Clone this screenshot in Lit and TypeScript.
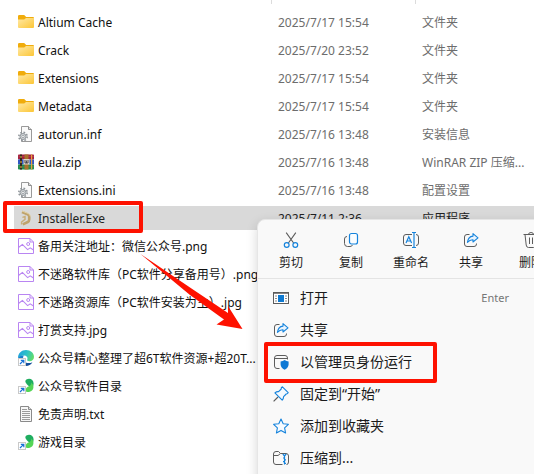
import { LitElement, html, svg, css, nothing } from "lit";
import { customElement } from "lit/decorators.js";
import { classMap } from "lit/directives/class-map.js";

const BLUE = "#1583dc";
const INK = "#5c5c5c";

const shortcut = svg`
  <rect x="0.5" y="8.5" width="7" height="7" fill="#fff" stroke="#c9c9c9"/>
  <path d="M2 14 L5.6 10.4 M2.8 10.3 H5.8 V13.3" fill="none" stroke="#1a73d8" stroke-width="1.2"/>`;

const leaves = svg`
  <path d="M8.4 1.4 C12 -0.4 15.5 1.6 15.6 5.4 C15.6 8 14.6 9 13 9.6 C11 8.6 9 6.8 7.8 4.8 C7 3.4 7.4 2 8.4 1.4Z" fill="#1fad60"/>
  <path d="M13.4 4.4 C16.8 8 15.8 12.6 11.8 13.8 C9.6 14.4 8 13.8 7.4 12.8 C7.4 9.8 9.4 8.8 11 8.2 C12.4 7.6 13.2 6.6 13.4 4.4Z" fill="#55d556"/>
  ${shortcut}`;

const gearPage = svg`
  <path d="M3.5 0.5 H10.5 L13.5 3.5 V15.5 H3.5Z" fill="#fafafa" stroke="#9a9a9a"/>
  <path d="M10.5 0.5 V3.5 H13.5" fill="#ddd" stroke="#8d8d8d"/>
  <circle cx="5" cy="10.5" r="4.2" fill="none" stroke="#8e9499" stroke-width="1.5" stroke-dasharray="1.7 1.6"/>
  <circle cx="5" cy="10.5" r="3" fill="#d5d8da" stroke="#8e9499" stroke-width="1"/>
  <circle cx="5" cy="10.5" r="1.2" fill="#fff" stroke="#8e9499" stroke-width="0.8"/>`;

const fileIcons = {
  folder: svg`
    <defs><linearGradient id="g" x1="0" y1="0" x2="1" y2="1"><stop offset="0" stop-color="#ffe9a6"/><stop offset="1" stop-color="#fcc636"/></linearGradient></defs>
    <path d="M0 2.2 Q0 1 1.2 1 H6.2 L8.2 3 H15 Q16 3 16 4 V8 H0Z" fill="#f0ac0c"/>
    <path d="M0 5.6 H6.2 L8 4 H16 V13 Q16 14 15 14 H1 Q0 14 0 13Z" fill="url(#g)"/>`,
  gear: gearPage,
  rar: svg`
    <rect x="0" y="0.5" width="16" height="5" rx="0.8" fill="#a3223e"/>
    <rect x="0" y="5.5" width="16" height="5" fill="#2f57c4"/>
    <rect x="0" y="10.5" width="16" height="5" rx="0.8" fill="#1c8f4d"/>
    <path d="M0.5 2.5 H16 M0.5 12.8 H16" stroke="#d86078" stroke-width="0.6" opacity="0.5"/>
    <rect x="2" y="0.5" width="2" height="15" fill="#32261e"/>
    <path d="M2 3 H4 M2 8 H4 M2 13 H4" stroke="#e8b93c" stroke-width="1"/>
    <rect x="6.5" y="0.5" width="4" height="15" fill="#a9712b"/>
    <rect x="5.5" y="5" width="6" height="5.5" fill="#dcd3c4"/>
    <path d="M7 6 V9 H10 V6 M8.5 6.5 V9" fill="none" stroke="#3d3a44" stroke-width="0.9"/>
    <rect x="13" y="0.5" width="1.2" height="15" fill="#e9a03a"/>`,
  installer: svg`
    <path d="M4 2 L9.6 4.4 Q11.2 5.2 11.2 6.8 V9.6 Q11.2 11.2 9.8 12 L4.8 14.4" fill="none" stroke="#bfa36c" stroke-width="2.6"/>
    <path d="M4 1 L10 3.4 Q12.2 4.4 12.3 6.4" fill="none" stroke="#e3d3aa" stroke-width="1"/>
    <path d="M4.4 7.4 L7 6.6 V9.4 L3.6 12 V14.6" fill="none" stroke="#c8ae7b" stroke-width="1.5"/>`,
  image: svg`
    <path d="M0.5 0.5 H12 L15.5 4 V15.5 H0.5Z" fill="#fff" stroke="#b985f2"/>
    <path d="M12 0.5 V4 H15.5" fill="none" stroke="#b985f2"/>
    <path d="M0.5 9.5 L4.4 6.4 L9.6 11.6 L12.2 9.8 L15.5 12" fill="none" stroke="#b985f2" stroke-width="1.1"/>
    <circle cx="10.2" cy="6" r="1.5" fill="none" stroke="#b985f2"/>`,
  edge: svg`
    <defs>
      <linearGradient id="e1" x1="0" y1="0.2" x2="1" y2="0.5"><stop offset="0" stop-color="#1e9fe0"/><stop offset="0.55" stop-color="#2fc3c4"/><stop offset="1" stop-color="#62dd6a"/></linearGradient>
      <linearGradient id="e2" x1="0" y1="0" x2="0.3" y2="1"><stop offset="0" stop-color="#1b8ad8"/><stop offset="1" stop-color="#124a98"/></linearGradient>
    </defs>
    <path d="M0 7.6 C0 3.4 3.6 0 8 0 C12.6 0 16 3.2 16 7 C16 9.6 14 11.2 11.6 11.2 C9.4 11.2 8.8 10.2 9.4 9.2 C10 7.4 8.6 5.6 6 5.6 C3 5.6 0.8 7 0 9Z" fill="url(#e1)"/>
    <path d="M0 8.8 C0.8 6.6 3 5.4 5.8 5.6 C5 6.8 4.8 8.4 5.6 10.2 C6.8 12.8 10.4 14 14.4 12.2 C13 14.8 10.6 16 8 16 C3.4 16 0 12.8 0 8.8Z" fill="url(#e2)"/>
    ${shortcut}`,
  leaves,
  text: svg`
    <path d="M2.5 0.5 H10.5 L13.5 3.5 V15.5 H2.5Z" fill="#f7f7f7" stroke="#8a8a8a"/>
    <path d="M10.5 0.5 V3.5 H13.5" fill="#ddd" stroke="#8a8a8a"/>
    <path d="M4 3.5 H9 M4 5.5 H12 M4 7.5 H12 M4 9.5 H12 M4 11.5 H12 M4 13.5 H12" stroke="#9b9b9b"/>`,
};

const share = svg`
  <path d="M6.5 2.5 H4 Q1.5 2.5 1.5 5 V12 Q1.5 14.5 4 14.5 H11 Q13.5 14.5 13.5 12 V11.5" fill="none" stroke="${INK}"/>
  <path d="M10 1.6 L15 5.9 L10 10 V7.7 C7.6 7.6 6 8.4 4.4 10.4 C4.8 6.8 6.6 4.4 10 4.1Z" fill="#eaf4fd" stroke="${BLUE}" stroke-width="1.1" stroke-linejoin="round"/>`;

const menuIcons = {
  cut: svg`
    <path d="M3.2 0.6 L10.6 11 M12.8 0.6 L5.4 11" fill="none" stroke="${INK}" stroke-width="1.1"/>
    <circle cx="3.7" cy="13" r="2.4" fill="none" stroke="${BLUE}" stroke-width="1.2"/>
    <circle cx="12.3" cy="13" r="2.4" fill="none" stroke="${BLUE}" stroke-width="1.2"/>`,
  copy: svg`
    <path d="M4 4.5 Q1.5 4.5 1.5 7 V11.5 Q1.5 14.5 4.5 14.5 H7 Q9 14.5 9.4 13" fill="none" stroke="${INK}"/>
    <rect x="6.5" y="1.5" width="8" height="10.5" rx="2" fill="#fafdff" stroke="${BLUE}" stroke-width="1.2"/>`,
  rename: svg`
    <path d="M9 2.5 H3 Q0.5 2.5 0.5 5 V11 Q0.5 13.5 3 13.5 H9 M13 2.5 Q15.5 2.5 15.5 5 V11 Q15.5 13.5 13 13.5" fill="none" stroke="${INK}"/>
    <path d="M3 11 L5.8 4.8 L8.6 11 M4 9 H7.6" fill="none" stroke="${BLUE}" stroke-width="1.2"/>
    <path d="M9 0.5 H13 M11 0.5 V15.5 M9 15.5 H13" fill="none" stroke="${BLUE}" stroke-width="1.2"/>`,
  share,
  trash: svg`
    <path d="M0.5 2.5 H15.5 M5.5 2.5 Q5.5 0.5 8 0.5 Q10.5 0.5 10.5 2.5 M2 2.5 L3.2 13 Q3.4 15.5 5.5 15.5 H10.5 Q12.6 15.5 12.8 13 L14 2.5 M6.5 5.5 V12 M9.5 5.5 V12" fill="none" stroke="${INK}"/>`,
  open: svg`
    <rect x="0.5" y="2.5" width="15" height="11" fill="#fff" stroke="${INK}"/>
    <path d="M0.5 3 H15.5" stroke="${INK}" stroke-width="1.5"/>
    <rect x="5" y="5" width="6" height="7" fill="#0f79d0"/>
    <path d="M2 6 H4 M2 8.5 H4 M2 11 H4 M12 6 H14 M12 8.5 H14 M12 11 H14" stroke="#8c8c8c"/>`,
  admin: svg`
    <path d="M6.5 14.5 H4 Q1.5 14.5 1.5 12 V4 Q1.5 1.5 4 1.5 H12 Q14.5 1.5 14.5 4 V5.5 M1.5 4.5 H14.5" fill="none" stroke="${INK}"/>
    <path d="M11.6 6 Q13.4 7.4 15.6 7.6 V10.6 Q15.4 14 11.6 15.8 Q7.8 14 7.6 10.6 V7.6 Q9.8 7.4 11.6 6Z" fill="#0f79d4"/>`,
  pin: svg`
    <path d="M5 11 L0.6 15.4" stroke="${INK}" stroke-width="1.2"/>
    <path d="M9.4 0.8 L15.2 6.6 Q14.8 8 13.2 8 L10.6 10.6 Q10.6 12.8 9.2 14.2 L1.9 6.9 Q3.6 5.4 5.6 5.6 L8.2 3 Q8 1.4 9.4 0.8Z" fill="#f4faff" stroke="${BLUE}" stroke-width="1.1" stroke-linejoin="round"/>`,
  star: svg`
    <path d="M8 1 L10.2 5.7 L15.4 6.3 L11.6 9.8 L12.6 15 L8 12.4 L3.4 15 L4.4 9.8 L0.6 6.3 L5.8 5.7Z" fill="#f7fbff" stroke="${BLUE}" stroke-width="1.1" stroke-linejoin="round"/>`,
  archive: svg`
    <path d="M9.5 14.5 H3 Q0.5 14.5 0.5 12 V4 Q0.5 1.5 3 1.5 H5.5 L7.5 3.5 H13 Q15.5 3.5 15.5 6 V12 Q15.5 14.5 13.5 14.5 M0.5 5.5 H5 L7.5 3.5" fill="none" stroke="${INK}"/>
    <path d="M9.8 4 L11.5 6 L13.2 4 M11.5 6 V14.5 M10 8 H11.5 M11.5 9.8 H13 M10 11.6 H11.5 M11.5 13.4 H13" fill="none" stroke="${BLUE}" stroke-width="1.2"/>`,
};

interface FileRow {
  icon: keyof typeof fileIcons;
  name: string;
  date?: string;
  type?: string;
  selected?: boolean;
}

const files: FileRow[] = [
  { icon: "folder", name: "Altium Cache", date: "2025/7/17 15:54", type: "文件夹" },
  { icon: "folder", name: "Crack", date: "2025/7/20 23:52", type: "文件夹" },
  { icon: "folder", name: "Extensions", date: "2025/7/17 15:54", type: "文件夹" },
  { icon: "folder", name: "Metadata", date: "2025/7/17 15:54", type: "文件夹" },
  { icon: "gear", name: "autorun.inf", date: "2025/7/16 13:48", type: "安装信息" },
  { icon: "rar", name: "eula.zip", date: "2025/7/16 13:48", type: "WinRAR ZIP 压缩..." },
  { icon: "gear", name: "Extensions.ini", date: "2025/7/16 13:48", type: "配置设置" },
  { icon: "installer", name: "Installer.Exe", date: "2025/7/11 2:36", type: "应用程序", selected: true },
  { icon: "image", name: "备用关注地址：微信公众号.png" },
  { icon: "image", name: "不迷路软件库（PC软件分享备用号）.png" },
  { icon: "image", name: "不迷路资源库（PC软件安装为主）.jpg" },
  { icon: "image", name: "打赏支持.jpg" },
  { icon: "edge", name: "公众号精心整理了超6T软件资源+超20T..." },
  { icon: "leaves", name: "公众号软件目录" },
  { icon: "text", name: "免责声明.txt" },
  { icon: "leaves", name: "游戏目录" },
];

const tools: { icon: keyof typeof menuIcons; label: string }[] = [
  { icon: "cut", label: "剪切" },
  { icon: "copy", label: "复制" },
  { icon: "rename", label: "重命名" },
  { icon: "share", label: "共享" },
  { icon: "trash", label: "删除" },
];

const commands: { icon: keyof typeof menuIcons; label: string; key?: string; marked?: boolean }[] = [
  { icon: "open", label: "打开", key: "Enter" },
  { icon: "share", label: "共享" },
  { icon: "admin", label: "以管理员身份运行", marked: true },
  { icon: "pin", label: "固定到“开始”" },
  { icon: "star", label: "添加到收藏夹" },
  { icon: "archive", label: "压缩到..." },
];

const icon = (shape: unknown) =>
  html`<svg class="icon" viewBox="0 0 16 16" aria-hidden="true">${shape}</svg>`;

const shared = css`
  .icon {
    display: block;
    flex: none;
    width: 16px;
    height: 16px;
  }
  .mark {
    position: absolute;
    border: 4px solid #fe1100;
    border-radius: 2px;
    pointer-events: none;
  }
`;

@customElement("file-list")
export class FileList extends LitElement {
  static styles = [
    shared,
    css`
      :host {
        display: block;
      }
      table {
        width: 100%;
        table-layout: fixed;
        border-spacing: 0;
      }
      th,
      td {
        padding: 0;
        text-align: left;
        font-weight: 400;
      }
      .col-name {
        width: 272px;
      }
      .col-date {
        width: 144px;
      }
      .head th {
        height: 8px;
        vertical-align: top;
      }
      .tick {
        height: 4px;
        border-right: 1px solid #dcdcdc;
      }
      .cell {
        display: flex;
        align-items: center;
        gap: 4px;
        height: 24px;
        margin: 2px 0;
        padding-left: 6px;
        white-space: nowrap;
        color: #6d6d6d;
      }
      .label {
        padding-top: 2px;
      }
      .name {
        position: relative;
        margin-left: 14px;
        padding-left: 4px;
        color: #111;
      }
      .selected .cell {
        background: #d9d9d9;
        color: #222;
      }
      .mark {
        left: -11px;
        top: -5px;
        width: 132px;
        height: 24px;
      }
    `,
  ];

  render() {
    return html`
      <table>
        <colgroup>
          <col class="col-name" />
          <col class="col-date" />
          <col />
        </colgroup>
        <thead>
          <tr class="head">
            <th aria-label="名称"><div class="tick"></div></th>
            <th aria-label="修改日期"><div class="tick"></div></th>
            <th aria-label="类型"></th>
          </tr>
        </thead>
        <tbody>
          ${files.map(
            (f) => html`<tr class=${classMap({ selected: !!f.selected })}>
              <td>
                <div class="cell name">
                  ${icon(fileIcons[f.icon])}<span class="label">${f.name}</span>
                  ${f.selected ? html`<span class="mark"></span>` : nothing}
                </div>
              </td>
              <td><div class="cell"><span class="label">${f.date ?? nothing}</span></div></td>
              <td><div class="cell"><span class="label">${f.type ?? nothing}</span></div></td>
            </tr>`
          )}
        </tbody>
      </table>
    `;
  }
}

@customElement("context-menu")
export class ContextMenu extends LitElement {
  static styles = [
    shared,
    css`
      :host {
        display: block;
        box-sizing: border-box;
        padding: 0 0 8px;
        border: 1px solid #e6e6e6;
        border-radius: 8px;
        background: #f9f9f9;
        box-shadow: 0 4px 12px rgba(0, 0, 0, 0.16);
        color: #1b1b1b;
      }
      button {
        display: flex;
        align-items: center;
        margin: 0;
        padding: 0;
        border: 0;
        background: none;
        color: inherit;
        font: inherit;
        white-space: nowrap;
      }
      .tools {
        display: flex;
        padding: 0 3px;
        height: 58px;
        border-bottom: 1px solid #e4e4e4;
      }
      .tool {
        flex: none;
        flex-direction: column;
        gap: 5px;
        width: 60px;
        padding-top: 12px;
        line-height: 20px;
      }
      .commands {
        margin: 0;
        padding: 3px 0 0;
        list-style: none;
      }
      .command {
        position: relative;
      }
      .command button {
        width: 100%;
        height: 32px;
        gap: 11px;
        padding: 0 64px 0 15px;
        font-size: 14px;
      }
      .key {
        margin-left: auto;
        font-size: 11px;
        color: #767676;
      }
      .mark {
        left: 6px;
        top: -4px;
        width: 165px;
        height: 33px;
      }
    `,
  ];

  render() {
    return html`
      <div class="tools">
        ${tools.map(
          (t) => html`<button class="tool" type="button">${icon(menuIcons[t.icon])}<span>${t.label}</span></button>`
        )}
      </div>
      <ul class="commands">
        ${commands.map(
          (c) => html`<li class="command">
            <button type="button">
              ${icon(menuIcons[c.icon])}<span>${c.label}</span>
              ${c.key ? html`<span class="key">${c.key}</span>` : nothing}
            </button>
            ${c.marked ? html`<span class="mark"></span>` : nothing}
          </li>`
        )}
      </ul>
    `;
  }
}

@customElement("app-root")
export class AppRoot extends LitElement {
  static styles = css`
    :host {
      display: block;
      position: relative;
      box-sizing: border-box;
      min-height: 100vh;
      overflow: hidden;
      background: #fff;
      font: 12px/20px "Noto Sans", "Noto Sans CJK SC", sans-serif;
    }
    .menu {
      position: absolute;
      left: 257px;
      right: -40px;
      top: 219px;
      bottom: -16px;
    }
    .arrow {
      position: absolute;
      left: 140px;
      top: 253px;
      width: 104px;
      height: 78px;
      pointer-events: none;
    }
  `;

  render() {
    return html`
      <file-list></file-list>
      <context-menu class="menu"></context-menu>
      <svg class="arrow" viewBox="140 253 104 78" aria-hidden="true">
        <path d="M140.5 254 L190 287.5 L228 313 L228 306 L242.5 329 L216.5 324.5 L224 319.5 L190 295 Z" fill="#fe1100" />
      </svg>
    `;
  }
}
